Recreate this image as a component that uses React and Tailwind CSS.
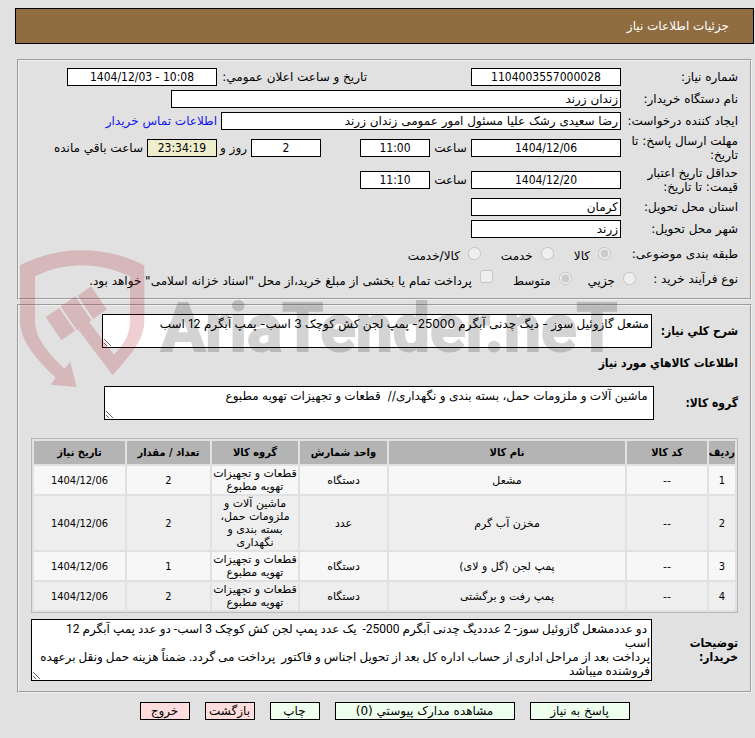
import React from 'react';

const goods = [
  { id: 1, code: '--', name: 'مشعل', unit: 'دستگاه', group: 'قطعات و تجهیزات تهویه مطبوع', count: 2, date: '1404/12/06' },
  { id: 2, code: '--', name: 'مخزن آب گرم', unit: 'عدد', group: 'ماشین آلات و ملزومات حمل، بسته بندی و نگهداری', count: 2, date: '1404/12/06' },
  { id: 3, code: '--', name: 'پمپ لجن (گل و لای)', unit: 'دستگاه', group: 'قطعات و تجهیزات تهویه مطبوع', count: 1, date: '1404/12/06' },
  { id: 4, code: '--', name: 'پمپ رفت و برگشتی', unit: 'دستگاه', group: 'قطعات و تجهیزات تهویه مطبوع', count: 2, date: '1404/12/06' },
];

const columns = [
  { title: 'ردیف', width: 'w-[26px]' },
  { title: 'کد کالا', width: 'w-20' },
  { title: 'نام کالا', width: '' },
  { title: 'واحد شمارش', width: 'w-[87px]' },
  { title: 'گروه کالا', width: 'w-[86px]' },
  { title: 'تعداد / مقدار', width: 'w-[83px]' },
  { title: 'تاریخ نیاز', width: 'w-[91px]' },
];

const description = 'مشعل گازوئیل سوز - دیگ چدنی آبگرم 25000- پمپ لجن کش کوچک 3 اسب- پمپ آبگرم 12 اسب';
const goodsGroup = ' ماشین آلات و ملزومات حمل، بسته بندی و نگهداری//  قطعات و تجهیزات تهویه مطبوع';
const buyerNotes =
  ' دو عددمشعل گازوئیل سوز- 2 عدددیگ چدنی آبگرم 25000-  یک عدد پمپ لجن کش کوچک 3 اسب- دو عدد پمپ آبگرم 12\nاسب\n' +
  'پرداخت بعد از مراحل اداری از حساب اداره کل بعد از تحویل اجناس و فاکتور  پرداخت می گردد. ضمناً هزینه حمل ونقل برعهده فروشنده میباشد';

const Field = ({ id, label, tall, children }) => (
  <div className={`flex items-center ${tall ? 'h-8' : 'h-[22px]'}`}>
    <label htmlFor={id} className="w-[117px] shrink-0 leading-[14px]">{label}</label>
    {children}
  </div>
);

const TextBox = ({ className = '', ...props }) => (
  <input
    type="text"
    readOnly
    className={`h-[18px] shrink-0 border border-black px-0.5 ${className}`}
    {...props}
  />
);

// Latin digits, centred
const NumBox = ({ className = '', ...props }) => (
  <TextBox dir="ltr" className={`text-center font-['DejaVu_Sans_Condensed'] ${className}`} {...props} />
);

const Choice = ({ label, ...props }) => (
  <label className="flex items-center gap-2">
    <input type="radio" disabled className="m-0 size-[13px]" {...props} />
    <span className="pt-1">{label}</span>
  </label>
);

const TextArea = ({ className = '', ...props }) => (
  <textarea
    readOnly
    className={`block border border-black bg-white py-0.5 leading-[14px] overflow-hidden resize ${className}`}
    {...props}
  />
);

const ActionButton = ({ className, children }) => (
  <button type="button" className={`h-[18px] border border-black leading-4 whitespace-nowrap ${className}`}>
    {children}
  </button>
);

const Watermark = () => (
  <div dir="ltr" aria-hidden="true" className="absolute top-[250px] left-5 flex gap-4 pointer-events-none">
    <svg width="125" height="138" viewBox="30 30 375 412" className="shrink-0 fill-[#af141e]/20">
      <path d="M30 75 Q118 30 215 30 Q315 30 403 75 V240 C403 302 360 345 308 405 L205 268 L200 269 L152 198 L196 168 L244 240 L238 246 L312 343 C342 311 360 288 360 240 V108 Q290 75 215 75 Q140 75 75 108 V240 C75 293 112 335 163 385 L181 365 L200 440 L122 433 L137 412 C75 354 30 300 30 240 Z" />
      <path d="M203 166 L243 138 L290 207 L250 236 Z" />
      <path d="M107 230 L148 203 L195 271 L154 300 Z" />
    </svg>
    <span className="pt-[46px] font-['Roboto'] text-[66px] leading-none font-bold text-black opacity-17 [-webkit-text-stroke:2px_black]">AriaTender.neT</span>
  </div>
);

const App = () => {
  return (
    <div dir="rtl" className="relative min-h-screen bg-[#e1e1e1] pt-2 pr-px pl-[15px] pb-4 font-['DejaVu_Sans',sans-serif] text-xs text-black">
      {/* Header */}
      <h1 className="flex items-center h-9 pr-6 bg-[#8f6d41] border border-black text-white">
        جزئیات اطلاعات نیاز
      </h1>

      {/* Need details */}
      <fieldset className="mt-[15px] mx-0.5 pt-[5px] pb-2 px-3 border-2 [border-style:groove] border-[#f0f0f0]">
        <div className="flex">
          <Field id="number" label="شماره نیاز:">
            <NumBox id="number" className="w-[150px] bg-white" defaultValue="1104003557000028" />
          </Field>
          <div className="flex items-center mr-[104px]">
            <label htmlFor="announce" className="w-[150px]">تاریخ و ساعت اعلان عمومي:</label>
            <NumBox id="announce" className="w-[150px] bg-white" defaultValue="1404/12/03 - 10:08" />
          </div>
        </div>
        <Field id="org" label="نام دستگاه خریدار:">
          <TextBox id="org" className="w-[450px] bg-white" defaultValue="زندان زرند" />
        </Field>
        <Field id="creator" label="ایجاد کننده درخواست:">
          <TextBox id="creator" className="w-[400px] bg-white" defaultValue="رضا سعیدی رشک علیا مسئول امور عمومی زندان زرند" />
          <a href="#contact" className="mr-1 whitespace-nowrap text-[#1414f0]">اطلاعات تماس خریدار</a>
        </Field>
        <Field id="deadline" label="مهلت ارسال پاسخ: تا تاریخ:" tall>
          <NumBox id="deadline" className="w-[150px] bg-white" defaultValue="1404/12/06" />
          <label htmlFor="deadline-hour" className="w-[41px] text-center">ساعت</label>
          <NumBox id="deadline-hour" className="w-[70px] bg-white" defaultValue="11:00" />
          <NumBox id="days" className="w-[70px] bg-white mr-[39px]" defaultValue="2" />
          <label htmlFor="days" className="w-[34px] pr-1">روز و</label>
          <NumBox id="remain" className="w-[70px] bg-[#eeeecc]" defaultValue="23:34:19" />
          <label htmlFor="remain" className="mr-1 whitespace-nowrap">ساعت باقي مانده</label>
        </Field>
        <Field id="validity" label="حداقل تاریخ اعتبار قیمت: تا تاریخ:" tall>
          <NumBox id="validity" className="w-[150px] bg-white" defaultValue="1404/12/20" />
          <label htmlFor="validity-hour" className="w-[41px] text-center">ساعت</label>
          <NumBox id="validity-hour" className="w-[70px] bg-white" defaultValue="11:10" />
        </Field>
        <Field id="province" label="استان محل تحویل:">
          <TextBox id="province" className="w-[150px] bg-white" defaultValue="کرمان" />
        </Field>
        <Field id="city" label="شهر محل تحویل:">
          <TextBox id="city" className="w-[150px] bg-white" defaultValue="زرند" />
        </Field>

        <div role="radiogroup" aria-labelledby="subject" className="flex items-center h-[27px]">
          <span id="subject" className="w-[127px] whitespace-nowrap">طبقه بندی موضوعی:</span>
          <div className="flex gap-5">
            <Choice name="subject" label="کالا" defaultChecked />
            <Choice name="subject" label="خدمت" />
            <Choice name="subject" label="کالا/خدمت" />
          </div>
        </div>
        <div role="radiogroup" aria-labelledby="process" className="flex items-center h-[23px]">
          <span id="process" className="w-[102px] whitespace-nowrap">نوع فرآیند خرید :</span>
          <div className="flex gap-4">
            <Choice name="process" label="جزیي" />
            <Choice name="process" label="متوسط" defaultChecked />
          </div>
          <label className="flex items-center gap-2 mr-5 whitespace-nowrap">
            <input type="checkbox" disabled className="m-0 mb-1 size-[13px]" />
            <span className="pt-1">پرداخت تمام یا بخشی از مبلغ خرید،از محل "اسناد خزانه اسلامی" خواهد بود.</span>
          </label>
        </div>
      </fieldset>

      {/* Goods */}
      <fieldset className="mt-1 mx-0.5 pt-2 pb-[10px] px-3 border-2 [border-style:groove] border-[#f0f0f0]">
        <div className="flex items-center">
          <label htmlFor="description" className="w-[86px] shrink-0 font-bold font-['DejaVu_Sans_Condensed']">شرح كلي نیاز:</label>
          <TextArea id="description" className="w-[550px] h-[34px] px-0.5 font-['Inter','DejaVu_Sans',sans-serif]" defaultValue={description} />
        </div>
        <h2 className="py-[7px] font-bold font-['DejaVu_Sans_Condensed']">اطلاعات كالاهاي مورد نیاز</h2>
        <div className="flex items-center mt-2">
          <label htmlFor="group" className="w-[84px] shrink-0 font-bold font-['DejaVu_Sans_Condensed']">گروه کالا:</label>
          <TextArea id="group" className="w-[550px] h-[34px] px-0.5 font-['Inter','DejaVu_Sans',sans-serif]" defaultValue={goodsGroup} />
        </div>

        <table className="w-full mt-[18px] table-fixed border-separate border-spacing-0.5 border border-[#b9b9b9] text-center text-[11px] leading-[13px]">
          <thead>
            <tr className="h-[23px]">
              {columns.map((col) => (
                <th key={col.title} className={`p-0 bg-[#b4b4b4] font-bold font-['DejaVu_Sans_Condensed'] whitespace-nowrap ${col.width}`}>
                  {col.title}
                </th>
              ))}
            </tr>
          </thead>
          <tbody>
            {goods.map((row) => (
              <tr key={row.id} className="odd:bg-[#f7f7f7] even:bg-[#eeeeee]">
                <td className="p-px font-['DejaVu_Sans_Condensed']">{row.id}</td>
                <td className="p-px">{row.code}</td>
                <td className="p-px">{row.name}</td>
                <td className="p-px">{row.unit}</td>
                <td className="p-px">{row.group}</td>
                <td className="p-px font-['DejaVu_Sans_Condensed']">{row.count}</td>
                <td className="p-px font-['DejaVu_Sans_Condensed']">{row.date}</td>
              </tr>
            ))}
          </tbody>
        </table>

        <div className="flex items-center mt-1.5">
          <label htmlFor="notes" className="w-[86px] shrink-0 pl-4 font-bold font-['DejaVu_Sans_Condensed'] leading-[14px]">توضیحات خریدار:</label>
          <TextArea id="notes" className="flex-1 h-[62px] px-px font-['Roboto','DejaVu_Sans',sans-serif]" defaultValue={buyerNotes} />
        </div>
      </fieldset>

      {/* Action buttons */}
      <div className="flex justify-center gap-[15px] mt-[9px]">
        <ActionButton className="w-[100px] bg-[#eeffee]">پاسخ به نیاز</ActionButton>
        <ActionButton className="w-[180px] bg-[#eeffee]">مشاهده مدارک پیوستي (0)</ActionButton>
        <ActionButton className="w-[50px] bg-[#eeffee]">چاپ</ActionButton>
        <ActionButton className="w-[50px] bg-[#ffdddd]">بازگشت</ActionButton>
        <ActionButton className="w-[50px] bg-[#ffdddd]">خروج</ActionButton>
      </div>

      <Watermark />
    </div>
  );
};

export default App;
